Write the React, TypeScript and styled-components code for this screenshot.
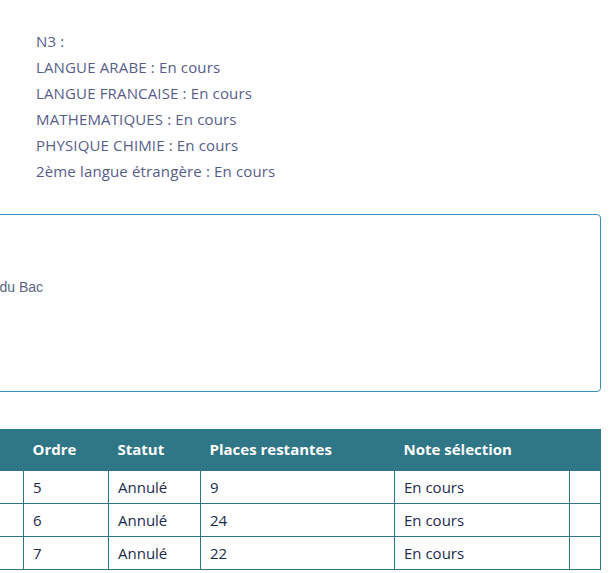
import styled, { createGlobalStyle } from 'styled-components';

const GlobalStyle = createGlobalStyle`
  html, body {
    margin: 0;
    padding: 0;
    background: #ffffff;
    overflow: hidden;
  }
`;

const notes = [
  'N3 :',
  'LANGUE ARABE : En cours',
  'LANGUE FRANCAISE : En cours',
  'MATHEMATIQUES : En cours',
  'PHYSIQUE CHIMIE : En cours',
  '2ème langue étrangère : En cours',
];

const rows = [
  { id: 1, code: 'C1', ordre: 5, statut: 'Annulé', places: 9, note: 'En cours' },
  { id: 2, code: 'C2', ordre: 6, statut: 'Annulé', places: 24, note: 'En cours' },
  { id: 3, code: 'C3', ordre: 7, statut: 'Annulé', places: 22, note: 'En cours' },
];

const widths = [183, 85, 92, 194, 175, 31];

export default function App() {
  return (
    <>
      <GlobalStyle />
      <Page>
        <Shifted>
          <NoteList>
            {notes.map((n) => (
              <NoteLine key={n}>{n}</NoteLine>
            ))}
          </NoteList>
          <InfoBox>
            <InfoText>Moyenne du Bac</InfoText>
          </InfoBox>
          <ChoixTable>
            <colgroup>
              {widths.map((w, i) => (
                <col key={i} style={{ width: w }} />
              ))}
            </colgroup>
            <thead>
              <tr>
                <HeadCell>Filière</HeadCell>
                <HeadCell>Ordre</HeadCell>
                <HeadCell>Statut</HeadCell>
                <HeadCell>Places restantes</HeadCell>
                <HeadCell>Note sélection</HeadCell>
                <HeadCell />
              </tr>
            </thead>
            <tbody>
              {rows.map((r) => (
                <tr key={r.id}>
                  <Cell>{r.code}</Cell>
                  <Cell>{r.ordre}</Cell>
                  <Cell>{r.statut}</Cell>
                  <Cell>{r.places}</Cell>
                  <Cell>{r.note}</Cell>
                  <Cell />
                </tr>
              ))}
            </tbody>
          </ChoixTable>
        </Shifted>
      </Page>
    </>
  );
}

const Page = styled.div`
  width: 610px;
  height: 573px;
  overflow: hidden;
  padding-top: 28px;
  box-sizing: border-box;
`;

const Shifted = styled.div`
  margin-left: -160px;
  width: 761px;
`;

const NoteList = styled.div`
  padding-left: 196px;
  margin-bottom: 30px;
`;

const NoteLine = styled.div`
  font-family: 'Open Sans', Lato, sans-serif;
  font-size: 15px;
  letter-spacing: 0.15px;
  line-height: 26px;
  color: #575d8b;
`;

const InfoBox = styled.div`
  height: 178px;
  box-sizing: border-box;
  border: 1px solid #3a8fc0;
  border-radius: 4px;
  padding: 62px 0 0 97px;
  margin-bottom: 37px;
`;

const InfoText = styled.div`
  font-family: 'Liberation Sans', Arial, sans-serif;
  font-size: 14px;
  line-height: 20px;
  color: #5b6487;
`;

const ChoixTable = styled.table`
  width: 761px;
  table-layout: fixed;
  border-collapse: collapse;
  font-family: 'Open Sans', Lato, sans-serif;
  font-size: 15px;
`;

const HeadCell = styled.th`
  background: #2f7686;
  color: #ffffff;
  font-weight: 700;
  text-align: left;
  height: 41px;
  padding: 0 9px;
  box-sizing: border-box;
`;

const Cell = styled.td`
  border: 1px solid #2f7686;
  color: #1c2b4d;
  height: 33px;
  padding: 0 9px;
  box-sizing: border-box;
`;
